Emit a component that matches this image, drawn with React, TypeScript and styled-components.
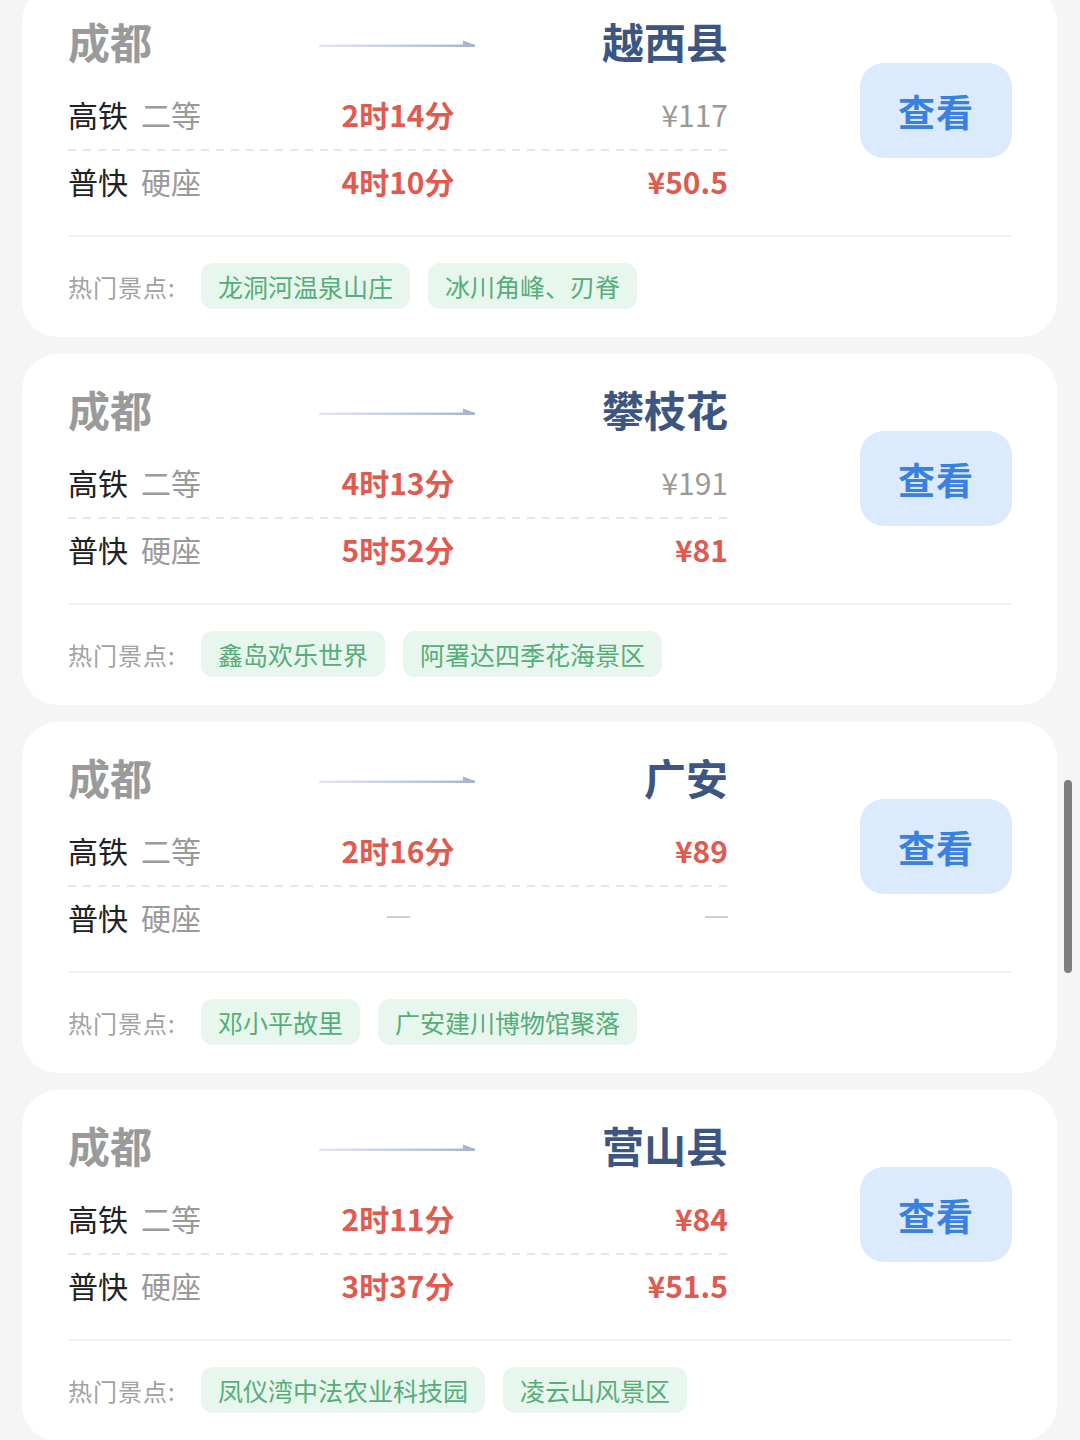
import React from "react";
import styled, { createGlobalStyle } from "styled-components";

type Seat = { name: string; cls: string; time?: string; price?: string; cheap?: boolean };
type Route = { from: string; to: string; rows: Seat[]; spots: string[] };

const ROUTES: Route[] = [
  {
    from: "成都",
    to: "越西县",
    rows: [
      { name: "高铁", cls: "二等", time: "2时14分", price: "¥117" },
      { name: "普快", cls: "硬座", time: "4时10分", price: "¥50.5", cheap: true },
    ],
    spots: ["龙洞河温泉山庄", "冰川角峰、刃脊"],
  },
  {
    from: "成都",
    to: "攀枝花",
    rows: [
      { name: "高铁", cls: "二等", time: "4时13分", price: "¥191" },
      { name: "普快", cls: "硬座", time: "5时52分", price: "¥81", cheap: true },
    ],
    spots: ["鑫岛欢乐世界", "阿署达四季花海景区"],
  },
  {
    from: "成都",
    to: "广安",
    rows: [
      { name: "高铁", cls: "二等", time: "2时16分", price: "¥89", cheap: true },
      { name: "普快", cls: "硬座" },
    ],
    spots: ["邓小平故里", "广安建川博物馆聚落"],
  },
  {
    from: "成都",
    to: "营山县",
    rows: [
      { name: "高铁", cls: "二等", time: "2时11分", price: "¥84", cheap: true },
      { name: "普快", cls: "硬座", time: "3时37分", price: "¥51.5", cheap: true },
    ],
    spots: ["凤仪湾中法农业科技园", "凌云山风景区"],
  },
];

const Global = createGlobalStyle`
  html, body {
    margin: 0;
    padding: 0;
    background: #f5f5f6;
    overflow: hidden;
  }
  body {
    font-family: "Noto Sans CJK SC", "Noto Sans", sans-serif;
  }
`;

export default function App() {
  return (
    <Page>
      <Global />
      <List>
        {ROUTES.map((r, i) => (
          <RouteCard key={i} route={r} />
        ))}
      </List>
      <ScrollThumb />
    </Page>
  );
}

function RouteCard({ route }: { route: Route }) {
  return (
    <Card>
      <Main>
        <Info>
          <Head>
            <FromCity>{route.from}</FromCity>
            <Arrow />
            <ToCity>{route.to}</ToCity>
          </Head>
          {route.rows.map((s, i) => (
            <SeatRow key={i} $first={i === 0}>
              <SeatName>
                {s.name}
                <SeatClass>{s.cls}</SeatClass>
              </SeatName>
              <Duration>{s.time ? s.time : <Dash />}</Duration>
              <Price $cheap={!!s.cheap}>{s.price ? s.price : <Dash />}</Price>
            </SeatRow>
          ))}
        </Info>
        <ViewButton>查看</ViewButton>
      </Main>
      <Divider />
      <Spots>
        <SpotsLabel>热门景点:</SpotsLabel>
        {route.spots.map((s) => (
          <Tag key={s}>{s}</Tag>
        ))}
      </Spots>
    </Card>
  );
}

function Arrow() {
  return (
    <ArrowSvg width="158" height="12" viewBox="0 0 158 12">
      <defs>
        <linearGradient id="arrowGrad" x1="0" x2="1" y1="0" y2="0">
          <stop offset="0" stopColor="#e3e7ef" />
          <stop offset="1" stopColor="#aab5ca" />
        </linearGradient>
      </defs>
      <rect x="0" y="7.5" width="156" height="2.5" rx="1" fill="url(#arrowGrad)" />
      <path d="M144 3.5 L156 8 L156 10 L144 10 Z" fill="#aab5ca" />
    </ArrowSvg>
  );
}

const Page = styled.div`
  width: 1080px;
  height: 1440px;
  overflow: hidden;
  position: relative;
`;

const List = styled.div`
  display: flex;
  flex-direction: column;
  gap: 17px;
  padding: 0 23px 0 22px;
  margin-top: -14px;
`;

const Card = styled.div`
  background: #fff;
  border-radius: 36px;
  height: 351px;
  box-sizing: border-box;
  padding: 30px 45px 0 46px;
  display: flex;
  flex-direction: column;
`;

const Main = styled.div`
  display: flex;
  justify-content: space-between;
  align-items: flex-start;
`;

const Info = styled.div`
  width: 660px;
  display: flex;
  flex-direction: column;
`;

const Head = styled.div`
  display: grid;
  grid-template-columns: 1fr auto 1fr;
  align-items: center;
  height: 50px;
  margin-bottom: 14px;
`;

const FromCity = styled.div`
  font-size: 42px;
  font-weight: 700;
  color: #9a9a9a;
  line-height: 50px;
`;

const ToCity = styled.div`
  font-size: 42px;
  font-weight: 700;
  color: #3d5681;
  line-height: 50px;
  text-align: right;
`;

const ArrowSvg = styled.svg`
  display: block;
  margin-top: 4px;
`;

const SeatRow = styled.div<{ $first: boolean }>`
  display: grid;
  grid-template-columns: 1fr 1fr 1fr;
  align-items: center;
  height: ${({ $first }) => ($first ? "71px" : "60px")};
  box-sizing: border-box;
  padding-bottom: ${({ $first }) => ($first ? "3px" : "0")};
  background-image: ${({ $first }) =>
    $first ? "repeating-linear-gradient(to right, #e3e6ed 0 8px, transparent 8px 14.8px)" : "none"};
  background-size: 100% 2px;
  background-position: 0 100%;
  background-repeat: no-repeat;
`;

const SeatName = styled.div`
  font-size: 30px;
  color: #222;
  line-height: 40px;
  white-space: nowrap;
`;

const SeatClass = styled.span`
  color: #9a9a9a;
  margin-left: 13px;
`;

const Duration = styled.div`
  font-size: 30px;
  font-weight: 700;
  color: #e05a50;
  line-height: 40px;
  display: flex;
  justify-content: center;
`;

const Price = styled.div<{ $cheap: boolean }>`
  font-size: 30px;
  font-weight: ${({ $cheap }) => ($cheap ? 700 : 400)};
  color: ${({ $cheap }) => ($cheap ? "#e05a50" : "#999")};
  line-height: 40px;
  display: flex;
  justify-content: flex-end;
`;

const Dash = styled.span`
  display: block;
  width: 23px;
  height: 2px;
  background: #cfcfd2;
`;

const ViewButton = styled.div`
  margin-top: 47px;
  width: 152px;
  height: 95px;
  border-radius: 24px;
  background: #dbeafc;
  color: #3a80e0;
  font-size: 37px;
  font-weight: 700;
  display: flex;
  align-items: center;
  justify-content: center;
  letter-spacing: 1px;
`;

const Divider = styled.div`
  height: 2px;
  background: #f2f2f4;
  margin-top: 24px;
`;

const Spots = styled.div`
  display: flex;
  align-items: center;
  gap: 18px;
  margin-top: 26px;
`;

const SpotsLabel = styled.div`
  font-size: 24px;
  color: #a2a2a2;
  width: 115px;
  letter-spacing: 1px;
`;

const Tag = styled.div`
  height: 46px;
  padding: 0 17px;
  border-radius: 12px;
  background: #e7f7ed;
  color: #55ad7a;
  font-size: 25px;
  display: flex;
  align-items: center;
  white-space: nowrap;
`;

const ScrollThumb = styled.div`
  position: absolute;
  right: 8px;
  top: 780px;
  width: 8px;
  height: 193px;
  border-radius: 4px;
  background: #7f7f7f;
`;
